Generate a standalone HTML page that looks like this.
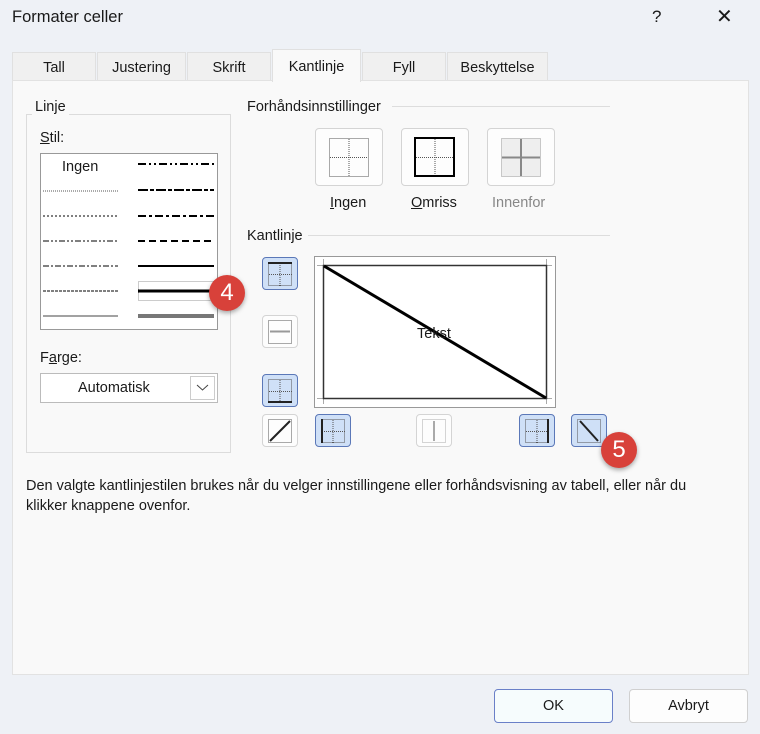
<!DOCTYPE html>
<html><head><meta charset="utf-8"><style>
*{margin:0;padding:0;box-sizing:border-box}
body{width:760px;height:734px;background:#eef1f6;font-family:"Liberation Sans",sans-serif;color:#1a1a1a;position:relative;overflow:hidden;font-size:14.5px}
.a{position:absolute}
.tab{position:absolute;top:52px;height:29px;background:#f0f0f0;border:1px solid #e0e0e0;border-bottom:none;text-align:center;line-height:30px;font-size:14.5px}
.btn{position:absolute;background:#fdfdfd;border:1px solid #d4d4d4;border-radius:4px}
.sel{background:#cfe0f7;border:1px solid #5b78b8;border-radius:4px}
.badge{position:absolute;width:36px;height:36px;border-radius:50%;background:#d8413a;color:#fff;font-size:24px;text-align:center;line-height:36px;box-shadow:0 2px 5px rgba(0,0,0,.35)}
</style></head><body>
<div class="a" style="left:12px;top:8px;font-size:16.5px">Formater celler</div>
<div class="a" style="left:652px;top:7px;font-size:17px">?</div>
<div class="a" style="left:716px;top:4px;font-size:20px">✕</div>

<div class="tab" style="left:12px;width:84px">Tall</div>
<div class="tab" style="left:97px;width:89px">Justering</div>
<div class="tab" style="left:187px;width:84px">Skrift</div>
<div class="tab" style="left:362px;width:84px">Fyll</div>
<div class="tab" style="left:447px;width:101px">Beskyttelse</div>
<div class="a" style="left:12px;top:80px;width:737px;height:595px;background:#f9f9f9;border:1px solid #e2e2e2"></div>
<div class="tab" style="left:272px;top:49px;width:89px;height:33px;background:#f9f9f9;line-height:34px">Kantlinje</div>

<div class="a" style="left:26px;top:114px;width:205px;height:339px;border:1px solid #dcdcdc"></div>
<div class="a" style="left:32px;top:99px;background:#f9f9f9;padding:0 3px">Linje</div>
<div class="a" style="left:40px;top:130px"><u>S</u>til:</div>
<div class="a" style="left:40px;top:153px;width:178px;height:177px;background:#fff;border:1px solid #999"></div>
<div class="a" style="left:62px;top:159px">Ingen</div>
<svg class="a" style="left:40px;top:153px" width="178" height="177">
<g stroke="#000" fill="none">
<line x1="3" y1="38" x2="78" y2="38" stroke-dasharray="1 1" stroke="#555"/>
<line x1="3" y1="63" x2="78" y2="63" stroke-dasharray="2 2"/>
<line x1="3" y1="88" x2="78" y2="88" stroke-dasharray="6 2 2 2 2 2"/>
<line x1="3" y1="113" x2="78" y2="113" stroke-dasharray="6 2 2 2"/>
<line x1="3" y1="138" x2="78" y2="138" stroke-dasharray="3 1"/>
<line x1="3" y1="163" x2="78" y2="163" stroke="#444"/>
<line x1="98" y1="11" x2="174" y2="11" stroke-width="2" stroke-dasharray="8 3 2 3 2 3"/>
<line x1="98" y1="37" x2="174" y2="37" stroke-width="2" stroke-dasharray="10 2 4 2"/>
<line x1="98" y1="63" x2="174" y2="63" stroke-width="2" stroke-dasharray="8 3 3 3"/>
<line x1="98" y1="88" x2="174" y2="88" stroke-width="2" stroke-dasharray="7 4"/>
<line x1="98" y1="113" x2="174" y2="113" stroke-width="2"/>
<rect x="98.5" y="128.5" width="76" height="19" stroke="#999" stroke-dasharray="1 1"/>
<line x1="98" y1="138" x2="174" y2="138" stroke-width="3"/>
<line x1="98" y1="163" x2="174" y2="163" stroke-width="4" stroke="#777"/>
</g></svg>
<div class="a" style="left:40px;top:350px">F<u>a</u>rge:</div>
<div class="a" style="left:40px;top:373px;width:178px;height:30px;background:#fff;border:1px solid #bbb"></div>
<div class="a" style="left:78px;top:380px">Automatisk</div>
<div class="a" style="left:190px;top:376px;width:25px;height:24px;border:1px solid #ccc;background:#fff"></div>
<svg class="a" style="left:196px;top:384px" width="13" height="8"><path d="M1 1 L6.5 6 L12 1" stroke="#444" fill="none"/></svg>

<div class="a" style="left:247px;top:99px">Forhåndsinnstillinger</div>
<div class="a" style="left:392px;top:106px;width:218px;border-top:1px solid #ddd"></div>
<div class="btn" style="left:315px;top:128px;width:68px;height:58px"></div>
<div class="btn" style="left:401px;top:128px;width:68px;height:58px"></div>
<div class="btn" style="left:487px;top:128px;width:68px;height:58px"></div>
<svg class="a" style="left:315px;top:128px" width="240" height="58" fill="none">
<g stroke="#555" stroke-dasharray="1 1"><rect x="14.5" y="10.5" width="39" height="38"/><line x1="34" y1="11" x2="34" y2="48"/><line x1="15" y1="29.5" x2="53" y2="29.5"/>
<line x1="120" y1="11" x2="120" y2="48"/><line x1="101" y1="29.5" x2="139" y2="29.5"/></g>
<rect x="100" y="10" width="39" height="38" stroke="#000" stroke-width="2"/>
<rect x="186.5" y="10.5" width="39" height="38" stroke="#999" stroke-dasharray="1 1" fill="#eee"/>
<line x1="206" y1="11" x2="206" y2="48" stroke="#888" stroke-width="2"/><line x1="187" y1="29.5" x2="225" y2="29.5" stroke="#888" stroke-width="2"/>
</svg>
<div class="a" style="left:330px;top:195px"><u>I</u>ngen</div>
<div class="a" style="left:411px;top:195px"><u>O</u>mriss</div>
<div class="a" style="left:492px;top:195px;color:#888">Innenfor</div>

<div class="a" style="left:247px;top:228px">Kantlinje</div>
<div class="a" style="left:308px;top:235px;width:302px;border-top:1px solid #ddd"></div>
<div class="a sel" style="left:262px;top:257px;width:36px;height:33px"></div>
<div class="btn" style="left:262px;top:315px;width:36px;height:33px"></div>
<div class="a sel" style="left:262px;top:374px;width:36px;height:33px"></div>
<div class="btn" style="left:262px;top:414px;width:36px;height:33px"></div>
<div class="a sel" style="left:315px;top:414px;width:36px;height:33px"></div>
<div class="btn" style="left:416px;top:414px;width:36px;height:33px"></div>
<div class="a sel" style="left:519px;top:414px;width:36px;height:33px"></div>
<div class="a sel" style="left:571px;top:414px;width:36px;height:33px"></div>
<svg class="a" style="left:0;top:0" width="760" height="734" fill="none">
<g stroke="#555" stroke-dasharray="1 1">
<rect x="268.5" y="262.5" width="23" height="23"/><rect x="268.5" y="320.5" width="23" height="23"/><rect x="268.5" y="379.5" width="23" height="23"/><rect x="268.5" y="419.5" width="23" height="23"/>
<rect x="321.5" y="419.5" width="23" height="23"/><rect x="422.5" y="419.5" width="23" height="23" stroke="#aaa"/><rect x="525.5" y="419.5" width="23" height="23"/><rect x="577.5" y="419.5" width="23" height="23"/>
<line x1="280" y1="263" x2="280" y2="286"/><line x1="269" y1="274.5" x2="292" y2="274.5"/>
<line x1="280" y1="380" x2="280" y2="403"/><line x1="269" y1="391.5" x2="292" y2="391.5"/>
<line x1="333" y1="420" x2="333" y2="443"/><line x1="322" y1="431.5" x2="345" y2="431.5"/>
<line x1="537" y1="420" x2="537" y2="443"/><line x1="526" y1="431.5" x2="549" y2="431.5"/>
</g>
<g stroke="#222" stroke-width="2">
<line x1="268" y1="263" x2="292" y2="263"/><line x1="268" y1="402" x2="292" y2="402"/>
<line x1="322" y1="419" x2="322" y2="443"/><line x1="548" y1="419" x2="548" y2="443"/>
<line x1="270" y1="441" x2="290" y2="421"/><line x1="580" y1="421" x2="598" y2="441"/>
</g>
<line x1="270" y1="331.5" x2="290" y2="331.5" stroke="#999" stroke-width="2"/>
<line x1="434" y1="421" x2="434" y2="441" stroke="#aaa" stroke-width="2"/>
<rect x="314.5" y="256.5" width="241" height="151" fill="#fff" stroke="#999"/>
<g stroke="#aaa"><line x1="317" y1="265.5" x2="552" y2="265.5"/><line x1="317" y1="398.5" x2="552" y2="398.5"/><line x1="323.5" y1="259" x2="323.5" y2="404"/><line x1="546.5" y1="259" x2="546.5" y2="404"/></g>
<rect x="323.5" y="265.5" width="223" height="133" stroke="#333" stroke-width="1.5"/>
<line x1="324" y1="266" x2="546" y2="398" stroke="#000" stroke-width="3"/>
</svg>
<div class="a" style="left:417px;top:326px">Tekst</div>

<div class="badge" style="left:209px;top:275px">4</div>
<div class="badge" style="left:601px;top:432px">5</div>

<div class="a" style="left:26px;top:476px;width:700px;line-height:20px">Den valgte kantlinjestilen brukes når du velger innstillingene eller forhåndsvisning av tabell, eller når du klikker knappene ovenfor.</div>

<div class="a" style="left:494px;top:689px;width:119px;height:34px;background:#f6fcfd;border:1px solid #6a80c8;border-radius:4px;text-align:center;line-height:32px">OK</div>
<div class="a" style="left:629px;top:689px;width:119px;height:34px;background:#fdfdfd;border:1px solid #d0d0d0;border-radius:4px;text-align:center;line-height:32px">Avbryt</div>
</body></html>
